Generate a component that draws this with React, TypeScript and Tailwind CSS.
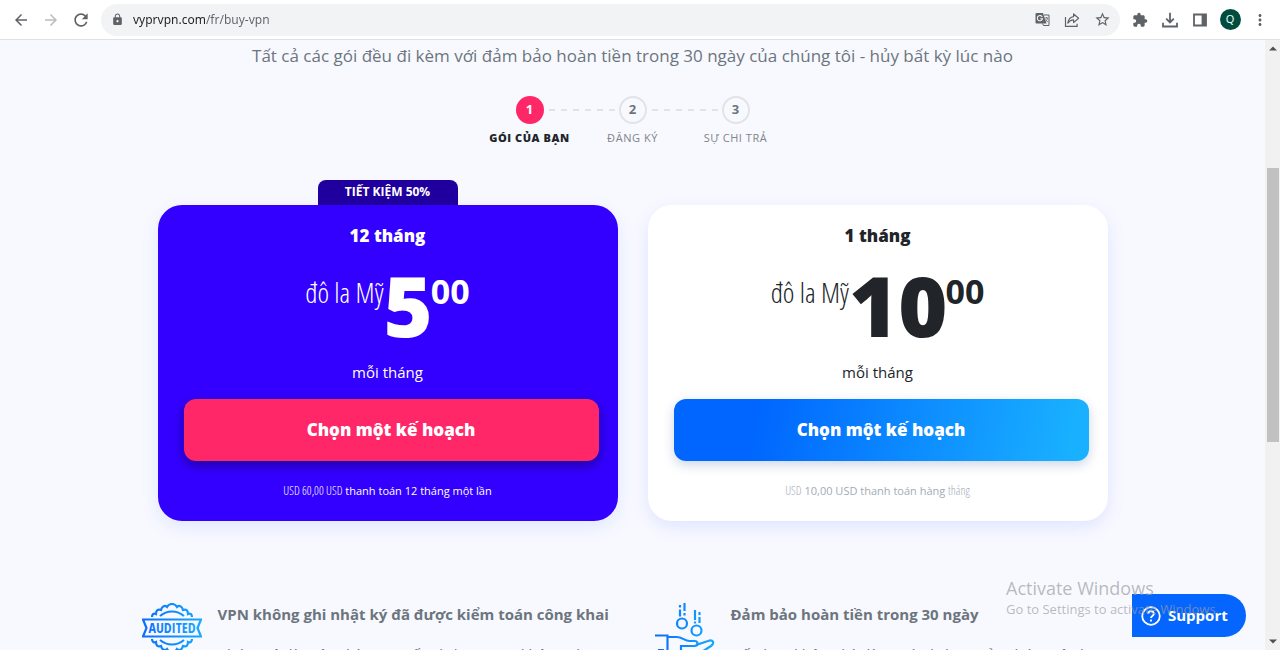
import type { ReactNode } from "react";
import {
  MdArrowBack,
  MdArrowForward,
  MdExtension,
  MdGTranslate,
  MdLock,
  MdMoreVert,
  MdRefresh,
  MdStarBorder,
} from "react-icons/md";

const condensed =
  "font-['Open_Sans_Condensed_Light','Noto_Sans_ExtraCondensed_Light','Noto_Sans_ExtraCondensed','Noto_Sans_Condensed_Light','Noto_Sans_Condensed','Roboto_Condensed_Light','Roboto_Condensed','Liberation_Sans_Narrow','Open_Sans_Condensed',sans-serif]";

function ToolButton({ label, children }: { label: string; children: ReactNode }) {
  return (
    <button type="button" aria-label={label} className="flex size-[30px] items-center justify-center">
      {children}
    </button>
  );
}

function TranslateIcon() {
  return (
    <svg width="15" height="15" viewBox="0 0 15 15" aria-hidden="true">
      <path d="M1.500 1H8l3.500 10.500h-10A1 1 0 0 1 .5 10.500V2a1 1 0 0 1 1-1z" fill="currentColor" />
      <path d="M7.300 5A2.600 2.600 0 1 0 7.500 6.800H5.200" fill="none" stroke="#f1f3f4" strokeWidth="1.100" />
      <path d="M9 3h5v10.500H8.500L7.500 11.500" fill="none" stroke="currentColor" />
      <path d="M9.800 6h3.400M11.500 5v1M12.600 6c-.3 1.800-1.200 2.800-2 3.600M10.600 7.500l2.200 2.700" fill="none" stroke="currentColor" strokeWidth="0.800" />
    </svg>
  );
}

function ShareIcon() {
  return (
    <svg width="16" height="16" viewBox="0 0 16 16" fill="none" stroke="currentColor" strokeWidth="1.2" aria-hidden="true">
      <path d="M1.5 5v9.4h11.600v-2.600" />
      <path d="M9.600 2v2.600C6.200 5 4.400 7.400 3.800 11.200c1.500-2.300 3.300-3.300 5.800-3.300v2.700L14.600 6.300z" strokeLinejoin="round" />
    </svg>
  );
}

function DownloadIcon() {
  return (
    <svg width="16" height="16" viewBox="0 0 16 16" fill="none" stroke="currentColor" strokeWidth="1.8" aria-hidden="true">
      <path d="M8 0.800v9.400M4.200 6.600 8 10.400l3.800-3.800M1 10.800v3.700h14v-3.700" />
    </svg>
  );
}

function SidePanelIcon() {
  return (
    <svg width="14" height="14" viewBox="0 0 14 14" aria-hidden="true">
      <path d="M1 1.500h12v11H1z" fill="none" stroke="currentColor" strokeWidth="1.800" />
      <path d="M8.600 1.500H13v11H8.600z" fill="currentColor" />
    </svg>
  );
}

function BrowserBar() {
  return (
    <header className="flex h-10 shrink-0 items-center border-b border-[#dfe1e5] bg-white pr-[5px] pl-1.5 text-[#5f6368]">
      <ToolButton label="Back">
        <MdArrowBack size={18} />
      </ToolButton>
      <ToolButton label="Forward">
        <MdArrowForward size={18} className="text-[#babcbe]" />
      </ToolButton>
      <ToolButton label="Reload">
        <MdRefresh size={20} />
      </ToolButton>
      <div className="ml-[5px] flex h-8 flex-1 items-center rounded-full bg-[#f1f3f4] pr-[3px] pl-2.5">
        <MdLock size={13} aria-hidden="true" />
        <input
          type="text"
          aria-label="Address"
          defaultValue="vyprvpn.com/fr/buy-vpn"
          className="ml-[9px] min-w-0 flex-1 bg-linear-[90deg,#202124_73px,#5f6368_73px] bg-clip-text font-['Noto_Sans',sans-serif] text-xs text-transparent outline-none"
        />
        <ToolButton label="Translate">
          <TranslateIcon />
        </ToolButton>
        <ToolButton label="Share">
          <ShareIcon />
        </ToolButton>
        <ToolButton label="Bookmark">
          <MdStarBorder size={17} />
        </ToolButton>
      </div>
      <div className="ml-[5px] flex">
        <ToolButton label="Extensions">
          <MdExtension size={16} />
        </ToolButton>
        <ToolButton label="Downloads">
          <DownloadIcon />
        </ToolButton>
        <ToolButton label="Side panel">
          <SidePanelIcon />
        </ToolButton>
        <ToolButton label="Profile">
          <span className="flex size-[21px] items-center justify-center rounded-full bg-[#004d40] text-[11px] text-white">Q</span>
        </ToolButton>
        <ToolButton label="Menu">
          <MdMoreVert size={18} />
        </ToolButton>
      </div>
    </header>
  );
}

function Steps() {
  const steps = ["Gói của bạn", "Đăng ký", "Sự chi trả"];
  return (
    <ol className="mt-7 grid grid-cols-[repeat(3,103px)] justify-center">
      {steps.map((label, i) => (
        <li key={label} className="relative flex flex-col items-center">
          {i > 0 && (
            <svg className="absolute top-[13px] -left-8 h-0.5 w-[66px]" aria-hidden="true">
              <path d="M0 1H66" stroke="#e2e3e7" strokeWidth="2" strokeDasharray="6 6" />
            </svg>
          )}
          <span
            className={
              i === 0
                ? "flex size-7 items-center justify-center rounded-full bg-[#ff2768] text-[13px] font-bold text-white"
                : "flex size-7 items-center justify-center rounded-full border-2 border-[#e2e3e7] text-[13px] font-bold text-[#6c757d]"
            }
          >
            {i + 1}
          </span>
          <span
            className={
              i === 0
                ? "mt-1 text-[11px] leading-5 font-extrabold tracking-wider whitespace-nowrap text-[#212529] uppercase"
                : "mt-1 text-[11px] leading-5 tracking-wider whitespace-nowrap text-[#7d848b] uppercase"
            }
          >
            {label}
          </span>
        </li>
      ))}
    </ol>
  );
}

type PlanProps = {
  title: string;
  amount: string;
  badge?: string;
  cardClass: string;
  buttonClass: string;
  noteClass: string;
  note: ReactNode;
};

function Plan({ title, amount, badge, cardClass, buttonClass, noteClass, note }: PlanProps) {
  return (
    <section className={`relative flex flex-col items-center rounded-3xl pt-4 pb-5 ${cardClass}`}>
      {badge && (
        <p className="absolute -top-[25px] h-[25px] w-[140px] rounded-t-lg bg-[#1f009f] text-center text-xs leading-6 font-bold text-white">
          {badge}
        </p>
      )}
      <h2 className="text-[17px] leading-[30px] font-extrabold">{title}</h2>
      <p className="mt-2 flex h-[94px] items-start">
        <span className={`mt-3 text-[28px] leading-[42px] font-light ${condensed}`}>đô la Mỹ</span>
        <span className="text-[84px] leading-[92px] font-extrabold">{amount}</span>
        <span className="mt-3 -ml-0.5 text-[34px] leading-10 font-bold">00</span>
      </p>
      <p className="mt-[7px] text-[15px] leading-6">mỗi tháng</p>
      <div className="mt-[15px] w-full pr-[19px] pl-[26px]">
        <button
          type="button"
          className={`h-[62px] w-full rounded-xl text-[17px] font-extrabold text-white ${buttonClass}`}
        >
          Chọn một kế hoạch
        </button>
      </div>
      <p className={`mt-5 text-[11px] leading-5 ${noteClass}`}>{note}</p>
    </section>
  );
}

function AuditedIcon() {
  return (
    <svg width="60" height="60" viewBox="0 0 60 60" fill="none" stroke="url(#audited)" strokeWidth="2.2" aria-hidden="true">
      <defs>
        <linearGradient id="audited" gradientUnits="userSpaceOnUse" x1="0" y1="0" x2="60" y2="0">
          <stop offset="0" stopColor="#0a6cff" />
          <stop offset="1" stopColor="#17aaff" />
        </linearGradient>
      </defs>
      <path d="M10 14c0-3 2-4 4-3 0-4 2-5 5-4 1-4 4-5 6-3 2-4 8-4 10 0 2-2 5-1 6 3 3-1 5 0 5 4 2-1 4 0 4 3" />
      <path d="M18 13c7-6 17-6 24 0M18 37c7 6 17 6 24 0" />
      <path d="M1 16.500h58l-3.500 8.500 3.500 8.500H1L4.500 25z" />
      <path d="M10 36c0 3 2 4 4 3 0 4 2 5 5 4 1 4 4 5 6 3 2 4 8 4 10 0 2 2 5 1 6-3 3 1 5 0 5-4 2 1 4 0 4-3" />
      <text
        x="30"
        y="30"
        fontSize="14"
        fontWeight="700"
        textAnchor="middle"
        stroke="none"
        fill="url(#audited)"
        className="font-['Open_Sans_Condensed',sans-serif]"
      >
        AUDITED
      </text>
    </svg>
  );
}

function RefundIcon() {
  return (
    <svg width="60" height="60" viewBox="0 0 60 60" fill="none" stroke="url(#refund)" strokeWidth="2.2" aria-hidden="true">
      <defs>
        <linearGradient id="refund" gradientUnits="userSpaceOnUse" x1="0" y1="0" x2="60" y2="0">
          <stop offset="0" stopColor="#0a6cff" />
          <stop offset="1" stopColor="#17aaff" />
        </linearGradient>
      </defs>
      <path d="M25 2v2.500M25 6.500v7M29.500 0v8M29.500 10v2.500M40 7v10M44.500 9v3M44.500 14v6M40 18.500v2" />
      <circle cx="27" cy="20.500" r="5" />
      <circle cx="41.500" cy="27.500" r="5" />
      <path d="M0 32.500h12.500V52M12.500 34h9c6 0 8 4 13 4h5c4 0 4 5 0 5H26v5" />
      <path d="M41 42l12-4c5-2 7 2 3 5L42 52M3 47h6" />
    </svg>
  );
}

function Feature({ icon, title, children }: { icon: ReactNode; title: string; children: ReactNode }) {
  return (
    <section className="flex gap-4 text-[#6c757d]">
      <div className="shrink-0">{icon}</div>
      <div>
        <h3 className="text-[15px] leading-[22px] font-bold whitespace-nowrap">{title}</h3>
        <p className="mt-[17px] text-[15px] leading-6">{children}</p>
      </div>
    </section>
  );
}

function ScrollBar() {
  return (
    <div className="flex w-[15px] shrink-0 flex-col items-center bg-[#f1f1f1] py-1.5 text-[#505050]" aria-hidden="true">
      <svg width="8" height="5" viewBox="0 0 8 5">
        <path d="M0 4.500 4 0.500l4 4z" fill="currentColor" />
      </svg>
      <div className="flex w-full flex-1 flex-col pl-0.5">
        <div className="grow-[117]" />
        <div className="mr-px grow-[274] bg-[#c1c1c1]" />
        <div className="grow-[197]" />
      </div>
      <svg width="8" height="5" viewBox="0 0 8 5">
        <path d="M0 0.500h8l-4 4z" fill="currentColor" />
      </svg>
    </div>
  );
}

export default function App() {
  return (
    <div className="relative flex h-screen flex-col overflow-hidden font-['Open_Sans',sans-serif]">
      <BrowserBar />
      <div className="flex min-h-0 flex-1">
        <main className="min-w-0 flex-1 overflow-hidden bg-[#f8f9ff] text-[#212529]">
          <p className="mt-1 text-center text-[17px] leading-6 text-[#6c757d]">
            Tất cả các gói đều đi kèm với đảm bảo hoàn tiền trong 30 ngày của chúng tôi - hủy bất kỳ lúc nào
          </p>
          <Steps />
          <div className="mx-auto mt-[57px] grid max-w-[950px] grid-cols-2 gap-[30px]">
            <Plan
              title="12 tháng"
              amount="5"
              badge="TIẾT KIỆM 50%"
              cardClass="bg-[#3300ff] text-white shadow-[0_6px_18px_#0055ff1a]"
              buttonClass="bg-[#ff2768] shadow-[0_4px_12px_#00000066]"
              noteClass="text-white"
              note={
                <>
                  <span className={`text-xs ${condensed}`}>USD 60,00 USD</span> thanh toán 12 tháng một lần
                </>
              }
            />
            <Plan
              title="1 tháng"
              amount="10"
              cardClass="bg-white shadow-[0_6px_18px_#0033ff1a]"
              buttonClass="bg-linear-[100deg,#0066ff_20%,#19b0ff_95%] shadow-[0_4px_12px_#00338833]"
              noteClass="text-[#a3abb8]"
              note={
                <>
                  <span className={`text-xs ${condensed}`}>USD</span> 10,00 USD thanh toán hàng{" "}
                  <span className={`text-xs ${condensed}`}>tháng</span>
                </>
              }
            />
          </div>
          <div className="mx-auto mt-[82px] grid max-w-[982px] grid-cols-2 gap-11">
            <Feature icon={<AuditedIcon />} title="VPN không ghi nhật ký đã được kiểm toán công khai">
              Chúng tôi là một nhà cung cấp dịch vụ VPN không ghi
            </Feature>
            <Feature icon={<RefundIcon />} title="Đảm bảo hoàn tiền trong 30 ngày">
              Nếu bạn không hài lòng với dịch vụ của chúng tôi, hãy yêu cầu
            </Feature>
          </div>
        </main>
        <ScrollBar />
      </div>
      <button
        type="button"
        className="absolute right-[34px] bottom-[13px] flex h-[43px] w-[114px] items-center gap-[7px] rounded-l-md rounded-r-full bg-[#0566ff] pl-[9px] text-[15px] font-bold text-white"
      >
        <svg width="20" height="20" viewBox="0 0 20 20" fill="none" stroke="currentColor" strokeWidth="1.800" aria-hidden="true">
          <circle cx="10" cy="10" r="8.800" />
          <path d="M7.200 7.800c0-3.600 5.600-3.600 5.600 0 0 2.200-2.800 2-2.800 4.200" />
          <path d="M10 13.600v2" />
        </svg>
        Support
      </button>
      <aside className="pointer-events-none absolute right-14 bottom-[31px] w-[218px] whitespace-nowrap text-[#9b9da3]/70">
        <p className="text-lg leading-[22px]">Activate Windows</p>
        <p className="text-[13px] leading-5">Go to Settings to activate Windows.</p>
      </aside>
    </div>
  );
}
